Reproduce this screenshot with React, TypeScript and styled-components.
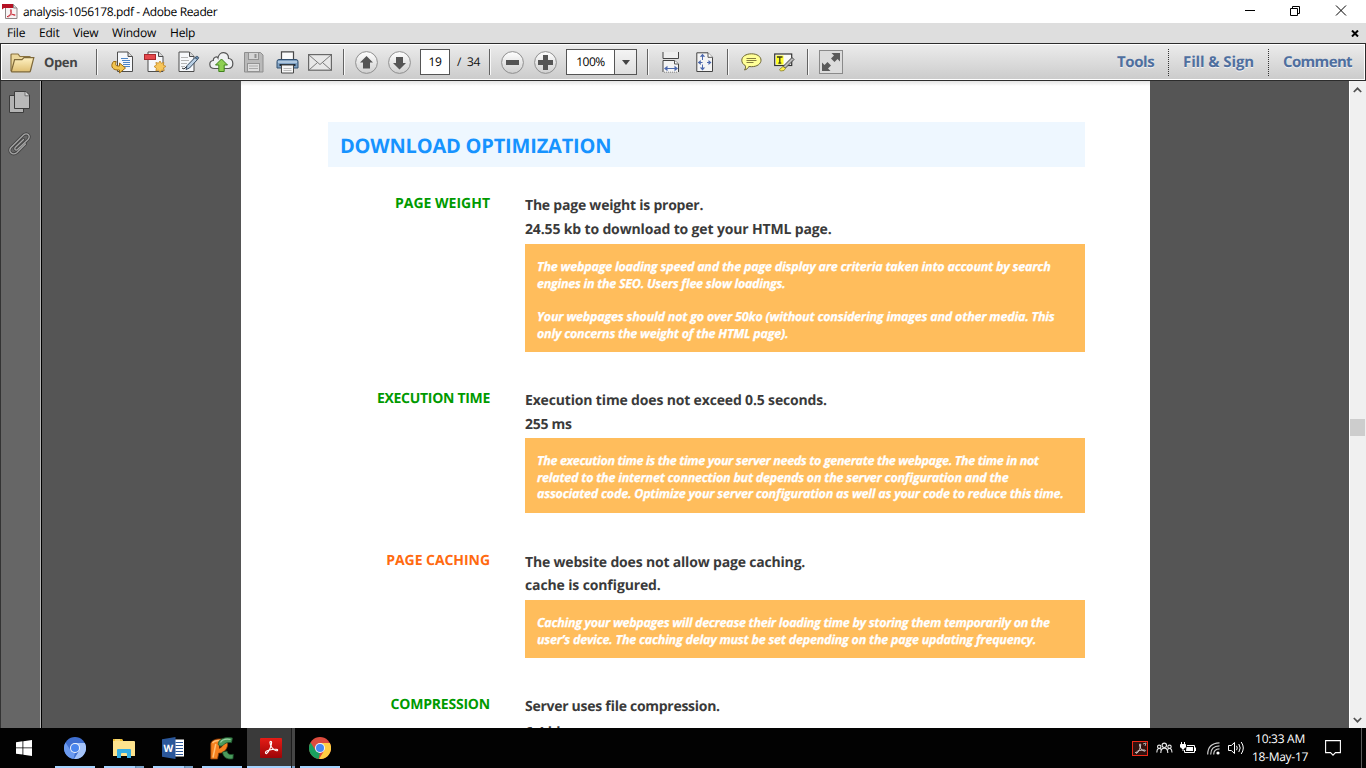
import React from "react";
import styled, { createGlobalStyle } from "styled-components";

const Global = createGlobalStyle`
  * { box-sizing: border-box; }
  html, body { margin: 0; padding: 0; }
  body { width: 1366px; height: 768px; overflow: hidden; background: #555;
    font-family: "Open Sans", "Noto Sans", sans-serif; text-rendering: geometricPrecision; }
  svg { display: block; flex: none; }
`;

const Screen = styled.div`
  width: 1366px; height: 768px; display: flex; flex-direction: column; overflow: hidden;
`;

/* Window chrome */
const TitleBar = styled.header`
  height: 23px; flex: none; background: #fff; display: flex; align-items: center; padding-left: 2px;
`;
const Title = styled.span`
  margin-left: 5px; font-size: 12px; line-height: 22px; color: #000; white-space: nowrap; letter-spacing: -0.37px; flex: 1;
`;
const WindowButtons = styled.div`
  display: flex; width: 122px; height: 23px;
`;
const MenuBar = styled.nav`
  height: 20px; flex: none; background: #dedede; display: flex; align-items: center; padding-left: 7px;
  font-size: 12px; line-height: 20px; color: #000;
`;
const MenuItem = styled.span<{ $w: number; $track?: number }>`
  width: ${(p) => p.$w}px; letter-spacing: ${(p) => p.$track ?? -0.2}px; white-space: nowrap;
`;
const MenuClose = styled.span`
  margin-left: auto; margin-right: 7px;
`;

/* Toolbar */
const ToolBar = styled.div`
  height: 38px; flex: none; display: flex; align-items: center; border: 1px solid #2c2c2c;
  box-shadow: inset 0 0 0 1px #fff; background: linear-gradient(#ececec, #cbcbcb);
`;
const Slot = styled.div<{ $w: number; $gap?: number }>`
  width: ${(p) => p.$w}px; margin-left: ${(p) => p.$gap ?? 0}px; height: 28px; flex: none;
  display: flex; align-items: center; justify-content: center;
`;
const Divider = styled.i<{ $gap: number }>`
  flex: none; width: 2px; height: 26px; margin-left: ${(p) => p.$gap}px;
  border-left: 1px solid #636363; border-right: 1px solid #f8f8f8;
`;
const OpenLabel = styled.span`
  width: 43px; margin-left: 9px; font-size: 13px; font-weight: 700; color: #444; letter-spacing: -0.35px; line-height: 20px;
`;
const PageInput = styled.div`
  width: 30px; height: 26px; margin-left: 9px; flex: none; border: 1px solid #555; background: #fff;
  font-size: 12px; line-height: 23px; text-align: center; letter-spacing: -0.4px; color: #000;
`;
const PageTotal = styled.span`
  width: 30px; margin-left: 7px; font-size: 12px; line-height: 20px; color: #111; letter-spacing: -0.25px; white-space: pre; flex: none;
`;
const ZoomBox = styled.div`
  display: flex; width: 71px; height: 26px; margin-left: 9px; flex: none; border: 1px solid #555; background: #fff;
`;
const ZoomValue = styled.span`
  width: 47px; font-size: 12px; line-height: 23px; text-align: center; letter-spacing: -0.5px; color: #000;
`;
const ZoomArrow = styled.span`
  flex: 1; display: flex; align-items: center; justify-content: center; border-left: 1px solid #555;
  background: linear-gradient(#f4f4f4, #dedede);
`;
const PanelLinks = styled.div`
  margin-left: auto; display: flex; height: 27px; align-items: center;
`;
const PanelLink = styled.span<{ $w: number; $first?: boolean; $track: number }>`
  width: ${(p) => p.$w}px; height: 27px; padding-left: 14px; line-height: 27px; white-space: nowrap;
  border-left: ${(p) => (p.$first ? "none" : "1px dotted #333")};
  font-size: 15px; font-weight: 700; color: #4f6f9f; letter-spacing: ${(p) => p.$track}px; text-shadow: 0 1px 0 #f4f4f4;
`;

/* Work area */
const Work = styled.main`
  height: 647px; flex: none; display: flex; background: #555;
`;
const Rail = styled.aside`
  width: 42px; flex: none; background: #666; border-left: 1px solid #333; border-right: 1px solid #000;
  box-shadow: inset -1px 0 0 #b5b5b5; padding: 9px 0 0 7px;
`;
const RailItem = styled.div<{ $top?: number }>`
  margin-top: ${(p) => p.$top ?? 0}px;
`;
const Paper = styled.article`
  width: 909px; height: 647px; margin-left: 199px; flex: none; background: linear-gradient(#e4e4e4, #fff 5px);
  padding: 41px 65px 0 87px; overflow: hidden;
`;
const ScrollBar = styled.div`
  width: 17px; margin-left: auto; border-left: 1px solid #fff; background: #f0f0f0; display: flex; flex-direction: column; align-items: center;
  padding: 6px 1px 5px 0;
`;
const Thumb = styled.i`
  width: 15px; height: 17px; margin-top: 326px; background: #cdcdcd;
`;
const ScrollDown = styled.span`
  margin-top: auto;
`;

/* Report content */
const SectionTitle = styled.h1<{ $track: number }>`
  margin: 0; height: 45px; padding-left: 12px; background: #eef7ff; color: #1693ff;
  font-size: 20px; font-weight: 700; line-height: 47px; letter-spacing: ${(p) => p.$track}px;
`;
const Entry = styled.section<{ $top: number }>`
  margin-top: ${(p) => p.$top}px; display: grid; grid-template-columns: 162px 560px; column-gap: 35px;
  font-feature-settings: "liga" 1;
`;
const Label = styled.h2<{ $warn?: boolean; $track: number }>`
  margin: 0; padding-top: 1px; text-align: right; white-space: nowrap; font-size: 14px; line-height: 20px; font-weight: 700;
  color: ${(p) => (p.$warn ? "#ff6a10" : "#009a00")}; letter-spacing: ${(p) => p.$track}px;
`;
const Fact = styled.p<{ $track?: number; $h?: number }>`
  margin: 0; height: ${(p) => p.$h ?? 24}px; padding-top: 3px; font-size: 14px; line-height: 20px; font-weight: 700;
  color: #3a3a3a; white-space: nowrap; letter-spacing: ${(p) => p.$track ?? 0}px;
`;
const Note = styled.div<{ $h: number }>`
  height: ${(p) => p.$h}px; padding: 14.8px 12px 0; background: #ffbd5c; color: #fff; font-size: 12.5px; line-height: 16.8px;
  font-weight: 700; font-style: italic; -webkit-text-stroke: 0.25px #fff;
`;
const NoteLine = styled.div<{ $track?: number }>`
  height: 16.8px; white-space: nowrap; letter-spacing: ${(p) => p.$track ?? 0}px;
`;

/* Taskbar */
const TaskBar = styled.footer`
  height: 40px; flex: none; display: flex; background: #020202; color: #fff;
`;
const Task = styled.div<{ $w: number; $gap?: number; $active?: boolean }>`
  width: ${(p) => p.$w}px; margin-left: ${(p) => p.$gap ?? 0}px; height: 40px; flex: none;
  display: flex; flex-direction: column; align-items: center; justify-content: space-between;
  background: ${(p) => (p.$active ? "#3a3a3a" : "transparent")};
`;
const TaskIcon = styled.div<{ $shift?: number }>`
  height: 38px; display: flex; align-items: center; padding-top: 2px; padding-left: ${(p) => p.$shift ?? 0}px;
`;
const Underline = styled.i<{ $stack?: boolean }>`
  align-self: stretch; height: 2px;
  background: ${(p) => (p.$stack ? "linear-gradient(90deg, #a5d3ff 31px, #5b85ac 31px, #7ba3c9 33px)" : "#a5d3ff")};
`;
const StackEdge = styled.i`
  width: 4px; height: 40px; flex: none; border-left: 1px solid #1c1c1c; background: linear-gradient(#464646 38px, #7ba3c9 38px);
`;
const Tray = styled.div`
  margin-left: auto; display: flex; align-items: center; width: 234px; height: 40px;
`;
const Clock = styled.div`
  width: 66px; margin-left: 2px; text-align: center; font-size: 12px; line-height: 18px; letter-spacing: -0.28px; white-space: nowrap;
`;
const PeekEdge = styled.i`
  width: 1px; height: 40px; margin-left: 20px; background: #5a5a5a;
`;

const Acro = ({ s, c = "#fff" }: { s: number; c?: string }) => (
  <path transform={`scale(${s})`} fill="none" stroke={c} strokeWidth="1.4" strokeLinecap="round"
    d="M3 16.5c0-2 6-4 13-4 2.500 0 2.500 2.200.2 1.800C12 13.500 8.500 8 8.500 4.300c0-2 2-2 2 .1C10.500 8.500 7 16 4.500 17.600 3.600 18.100 3 17.300 3 16.500z" />
);

const PdfAppIcon = () => (
  <svg width="16" height="17" viewBox="0 0 16 17">
    <path d="M3.500 1.500h8l3.500 3.500v10.500H3.500z" fill="#f7f4f4" stroke="#8d8585" />
    <path d="M11.500 1.500V5H15" fill="#ddd" stroke="#8d8585" />
    <path d="M0 1h11v4H2L0 6.500z" fill="#b51224" />
    <g transform="translate(4 5)"><Acro s={0.52} c="#c41422" /></g>
  </svg>
);

const FolderIcon = () => (
  <svg width="25" height="21" viewBox="0 0 25 21">
    <defs><linearGradient id="fo" x2="0" y2="1"><stop stopColor="#fff2c4" /><stop offset="1" stopColor="#dfbf72" /></linearGradient></defs>
    <path d="M1 19V3q0-1 1-1h6l2 2.500h9.500q1 0 1 1V18" fill="#ecd79b" stroke="#8a7340" strokeWidth="1.200" />
    <path d="M1.300 19.500 4.600 7.600H12l2-2h9.800L20.400 19q-.2.800-1 .8H2q-.8 0-.7-.3z" fill="url(#fo)" stroke="#7e6839" strokeWidth="1.200" />
  </svg>
);

const Sheet = ({ x = 0 }: { x?: number }) => (
  <g transform={`translate(${x} 0)`}>
    <path d="M1 1h10.500L16 5.500V20.500H1z" fill="#f6f8fb" stroke="#4d4d4d" />
    <path d="M11.500 1v4.500H16" fill="#d8d8d8" stroke="#4d4d4d" />
  </g>
);

const ConvertIcon = () => (
  <svg width="23" height="23" viewBox="0 0 23 23">
    <Sheet x={5.5} />
    <path d="M10 7.500h7M11 9.500h8M12 11.500h7M12 13.500h7M12 15.500h7" stroke="#4d86c8" />
    <path d="M2.500 10.500C-.5 14 .5 18.500 6 19h2.500v3l6-5-6-5V15H6.500c-2-.2-2.300-2-1.300-4.500z" fill="#f3c54f" stroke="#9a6b12" />
  </svg>
);
const CreatePdfIcon = () => (
  <svg width="23" height="23" viewBox="0 0 23 23">
    <Sheet x={3} />
    <rect x=".5" y="3.500" width="11" height="5" fill="#e5484c" stroke="#a7282d" />
    <path d="m16 10 1.300 2.300 2.600-.8-.6 2.600 2.700 1.300-2.500 1.400.8 2.700-2.700-.5-1.500 2.600-1.600-2.500-2.600.7.5-2.700-2.400-1.600 2.500-1.400-.6-2.600 2.600.7z" fill="#f7c65a" stroke="#c28725" strokeWidth=".8" />
  </svg>
);
const EditIcon = () => (
  <svg width="22" height="23" viewBox="0 0 22 23">
    <Sheet x={0} />
    <path d="M3 6.500h7M3 9.500h8M3 12.500h6M3 15.500h4" stroke="#b5b5b5" />
    <path d="m4 17 2 1 3-3" fill="none" stroke="#333" />
    <path d="m17 6.500 2.500 2L11.500 17l-3.500 1.500 1-3.800z" fill="#bad0e5" stroke="#35495f" />
    <path d="m17 6.500 2-1.500 2 1.800-1.500 1.700z" fill="#668aac" stroke="#35495f" strokeWidth=".7" />
  </svg>
);
const CloudIcon = () => (
  <svg width="25" height="22" viewBox="0 0 25 22">
    <path d="M5.500 17.500C-.5 17.500-.5 10 4.300 9.500 4 6 8 5 9 7 10-.5 20 0 19.500 7.500c5.500.3 6 9.500 0 10z" fill="#f0f2f3" stroke="#555" strokeWidth="1.200" />
    <path d="m12.500 8 6 6h-3.300v6.500h-5.400V14H6.500z" fill="#8ed052" stroke="#40821f" />
  </svg>
);
const SaveIcon = () => (
  <svg width="20" height="21" viewBox="0 0 20 21">
    <path d="M.5.5h16L19 3v17H.5z" fill="#b9b9b9" stroke="#8e8e8e" />
    <rect x="4.500" y=".5" width="10" height="7" fill="#d5d5d5" stroke="#929292" />
    <path d="M11.500 2v4" stroke="#8e8e8e" strokeWidth="2" />
    <rect x="3.500" y="11.500" width="12" height="8" fill="#dedede" stroke="#929292" />
    <path d="M5 14h9M5 16.500h9" stroke="#aaa" />
  </svg>
);
const PrintIcon = () => (
  <svg width="23" height="23" viewBox="0 0 23 23">
    <path d="M5.500 9V.8h12V9" fill="#fafafa" stroke="#484848" strokeWidth="1.200" />
    <path d="M3 8.500h17q2 0 2 2V17H1v-6.500q0-2 2-2z" fill="#7d9fc2" stroke="#33506f" />
    <path d="M2 11h19" stroke="#c1d6ea" strokeWidth="1.500" />
    <path d="M3.500 14h16" stroke="#1d2c3b" strokeWidth="2" />
    <path d="M5.500 14h12v8h-12z" fill="#f5f5f5" stroke="#484848" />
    <path d="M7.500 17.500h8M7.500 19.500h8" stroke="#bbb" />
  </svg>
);
const MailIcon = () => (
  <svg width="24" height="17" viewBox="0 0 24 17">
    <rect x=".6" y=".6" width="22.800" height="15.600" fill="#e8e8e8" stroke="#686868" strokeWidth="1.200" />
    <path d="m1 1 11 9.500L23 1M1 16l8.500-7.500M23 16l-8.500-7.500" fill="none" stroke="#7a7a7a" />
  </svg>
);

const RoundIcon = ({ d }: { d: string }) => (
  <svg width="23" height="23" viewBox="0 0 23 23">
    <defs><linearGradient id="rd" x2="0" y2="1"><stop stopColor="#fff" /><stop offset="1" stopColor="#cfcfcf" /></linearGradient></defs>
    <circle cx="11.500" cy="11.500" r="10.900" fill="url(#rd)" stroke="#8e8e8e" />
    <path d={d} fill="#555" />
  </svg>
);
const UP = "M11.500 5l6.500 6.500h-3V17.500H8v-6H5z";
const DOWN = "M11.500 18.500l6.500-6.500h-3V6H8v6H5z";
const MINUS = "M5 9h13v5H5z";
const PLUS = "M9 4h5v5h5v5h-5v5H9v-5H4V9h5z";

const FitWidthIcon = () => (
  <svg width="18" height="22" viewBox="0 0 18 22">
    <path d="M1 1v6.500h15.500V1" fill="#eee" stroke="#444" />
    <path d="M1 21v-11.500h11.500l4 3.500v8" fill="#f4f4f4" stroke="#444" />
    <path d="M12.500 9.500v3.500h4" fill="#fff" stroke="#555" />
    <path d="M2 21.200h14" stroke="#888" strokeDasharray="1 1" />
    <path d="M3.500 17.500h11" stroke="#4c68ad" />
    <path d="m2 17.500 3.500-2.800v5.600zM16 17.500l-3.500-2.800v5.600z" fill="#4c68ad" />
  </svg>
);
const FitPageIcon = () => (
  <svg width="18" height="21" viewBox="0 0 18 21">
    <path d="M.8.8H12l4.500 4.500V19.500H.8z" fill="#f4f4f4" stroke="#444" />
    <path d="M12 .8v4.500h4.500" fill="#fff" stroke="#555" />
    <path d="M6.500 4v4M6.500 12.500v4M2.500 10.500h4M11 10.500h3" stroke="#4c68ad" />
    <path d="m6.500 1.800 2.700 3H3.800zM6.500 18.500l2.700-3H3.800zM1.800 10.500l3-2.500v5zM15.500 10.500l-3-2.500v5z" fill="#4c68ad" />
  </svg>
);
const CommentIcon = () => (
  <svg width="21" height="18" viewBox="0 0 21 18">
    <path d="M10.500.8c5.500 0 9.500 2.700 9.500 6.400s-4 6.500-9.500 6.500L7.800 13.500C7 15.500 5.500 16.500 3.500 17c1-1.300 1.300-2.700.8-4.400C2 11.500.8 9.500.8 7.200.8 3.500 5 .8 10.500.8z" fill="#ffff98" stroke="#6b6432" />
    <path d="M5.500 5.500h9.500M5.500 7.500h10M5.500 9.500h7" stroke="#857d40" />
  </svg>
);
const HighlightIcon = () => (
  <svg width="21" height="19" viewBox="0 0 21 19">
    <rect x=".7" y="1" width="17" height="11.500" fill="#fafafa" stroke="#333" strokeWidth="1.200" />
    <path d="M2 2.500h7.500v9H2z" fill="#ffff28" />
    <path d="M3 4h5.500M5.800 4v6M4.300 10.200h3" fill="none" stroke="#3a3a1d" strokeWidth="1.300" />
    <path d="m18 4.500 2 2L11.500 15 9 13.500z" fill="#bbb" stroke="#444" />
    <path d="m9 13.500 2.500 1.800-1.500 2.200-3.500.5-1-1.500z" fill="#fff04a" stroke="#89802a" strokeWidth=".8" />
  </svg>
);
const ExpandIcon = () => (
  <svg width="24" height="24" viewBox="0 0 24 24">
    <rect x=".5" y=".5" width="23" height="23" fill="#dcdcdc" stroke="#8a8a8a" />
    <path d="M12.500 3H21v8.500l-2.500-2.500-3 3-3.500-3.500 3-3zM3 12.500 5.500 15l3-3 3.500 3.500-3 3 2.500 2.500H3z" fill="#5a5a5a" />
  </svg>
);

const PagesIcon = () => (
  <svg width="22" height="24" viewBox="0 0 22 24">
    <path d="M1.500 5.500h14v17h-14z" fill="#b3b3b3" stroke="#3c3c3c" />
    <path d="M6.500 1.500H18l3.500 3.500v13.500h-15z" fill="#b9b9b9" stroke="#3c3c3c" />
    <path d="M17 1.800v4h4" fill="#d7d7d7" stroke="#707070" />
  </svg>
);
const ClipIcon = () => (
  <svg width="23" height="24" viewBox="0 0 23 24" fill="none" strokeLinecap="round">
    <g stroke="#424242" strokeWidth="3"><path d="M17.500 12 9 20.500C4.500 24-.5 19.500 3 15.500L15.500 3c4-3 7.500 1 4.500 4.500L9.500 17.500c-2 1.500-3.500-.5-2-2.300l8-7.700" /></g>
    <g stroke="#a5a5a5" strokeWidth="1.300"><path d="M17.500 12 9 20.500C4.500 24-.5 19.500 3 15.500L15.500 3c4-3 7.500 1 4.500 4.500L9.500 17.500c-2 1.500-3.500-.5-2-2.300l8-7.700" /></g>
  </svg>
);

const ChromeIcon = ({ c, core }: { c: [string, string, string]; core: string }) => (
  <svg width="22" height="22" viewBox="0 0 22 22">
    <circle cx="11" cy="11" r="11" fill={c[0]} />
    <path d="M1.500 5.500 6.700 13.500 11 16l-1.500 6A11 11 0 0 1 1.500 5.500z" fill={c[1]} />
    <path d="M11 6h9.800A11 11 0 0 1 10 22l5.300-8.500z" fill={c[2]} />
    <circle cx="11" cy="11" r="5" fill="#f3f6fb" />
    <circle cx="11" cy="11" r="4" fill={core} />
  </svg>
);
const WinIcon = () => (
  <svg width="16" height="16" viewBox="0 0 16 16"><path d="M0 2.200 6.500 1.300v6.200H0zM7.300 1.200 16 0v7.500H7.300zM0 8.300h6.500v6.300L0 13.700zM7.300 8.300H16V16l-8.700-1.200z" fill="#fff" /></svg>
);
const ExplorerIcon = () => (
  <svg width="22" height="19" viewBox="0 0 22 19">
    <path d="M0 1q0-1 1-1h8l1 2h11q1 0 1 1v14H0z" fill="#fde38d" />
    <path d="M0 1q0-1 1-1h8l1 2H0z" fill="#eebd2f" />
    <path d="M2 1h5" stroke="#fff2c0" />
    <path d="M4 19v-8q0-1 1-1h12q1 0 1 1v8h-4v-4q0-1-1-1H9q-1 0-1 1v4z" fill="#35aee3" />
  </svg>
);
const WordText = styled.text`
  font: 700 10px "Open Sans", sans-serif; fill: #fff;
`;
const WordIcon = () => (
  <svg width="22" height="22" viewBox="0 0 22 22">
    <rect x="11" y="2.500" width="11" height="17" fill="#fff" />
    <path d="M13.500 5.500H21M13.500 8.500H21M13.500 11.500H21M13.500 14.500H21M13.500 17.500H21" stroke="#2b579a" />
    <path d="M0 2.300 13.500 0v22L0 19.700z" fill="#2b579a" />
    <WordText x="1.400" y="14.700">W</WordText>
  </svg>
);
const PcIcon = () => (
  <svg width="24" height="23" viewBox="0 0 24 23" fill="none">
    <path d="M.8 6.500C2 3 6 1.500 12 2c5.500.4 6.500 4.500 5 8.300-1.500 4-5 6.200-8.300 5.700L7.500 22H.8z" fill="#f5811f" stroke="#8c3c08" strokeWidth=".8" />
    <path d="M2.500 6C4 4 7 3.200 11 3.500M5.800 7 3 20.500" stroke="#ffbf75" strokeWidth="1.500" />
    <path d="M9 7h2.500c1.500.2 1 4-2.500 4.800z" fill="#5b2504" />
    <path d="M22.500 1C16-.3 10 1.500 8.500 5.500c-1 3 1.500 4.500 4.500 3C14.500 6 18 5 21.500 5.700zM12.500 15c.3 5 4.500 8 10.500 6.800l.3-4.600c-3.500 1-5.800-.2-6.300-3.200z" fill="#4a9a5c" stroke="#1c4f2a" strokeWidth=".8" />
    <path d="M10.500 5.500c1.500-2.800 5.500-3.800 10-3" stroke="#9bd1a4" strokeWidth="1.200" />
  </svg>
);
const ReaderIcon = () => (
  <svg width="22" height="20" viewBox="0 0 22 20">
    <defs><linearGradient id="rr" x2="0" y2="1"><stop stopColor="#e51c16" /><stop offset="1" stopColor="#9c0507" /></linearGradient></defs>
    <rect width="22" height="20" rx="1" fill="url(#rr)" />
    <g transform="translate(3 1)"><Acro s={0.82} /></g>
  </svg>
);
const TrayReaderIcon = () => (
  <svg width="16" height="15" viewBox="0 0 16 15">
    <rect x=".5" y=".5" width="15" height="14" fill="#33120f" stroke="#f02a18" />
    <g transform="translate(2 1)"><Acro s={0.64} c="#ddd" /></g>
    <path d="m11 3 3-1-1 3" stroke="#aaa" fill="none" />
  </svg>
);
const PeopleIcon = () => (
  <svg width="17" height="12" viewBox="0 0 17 12" fill="none" stroke="#e8e8e8" strokeWidth="1.100">
    <circle cx="8.300" cy="3.300" r="2.200" /><circle cx="3.200" cy="4.800" r="1.700" /><circle cx="13.500" cy="4.800" r="1.700" />
    <path d="M4.800 11c0-6.500 7-6.500 7 0M.8 10.500C.8 6 4 5.500 5 7.500M16 10.500c0-4.500-3.200-5-4.200-3" />
  </svg>
);
const BatteryIcon = () => (
  <svg width="17" height="13" viewBox="0 0 17 13" fill="none" stroke="#fff">
    <path d="M1.500 0v2.500M4.500 0v2.500" />
    <path d="M.5 2.500h5v2.500L4 6.500H2L.5 5z" fill="#fff" /><path d="M3 6.500v2.500" />
    <path d="M7 3.500h7.500v7h-10V8" /><path d="M6.500 5h6.500v4H6z" fill="#fff" stroke="none" /><path d="M15.500 5.500v3.500" />
  </svg>
);
const WifiIcon = () => (
  <svg width="13" height="13" viewBox="0 0 13 13" fill="none" stroke="#ccc" strokeWidth="1.200">
    <path d="M.7 12.500C.7 5 5 1 12.500.8M3.700 12.500C3.700 7 7 4 12.500 3.900M6.700 12.500C6.700 9 9 7 12.500 6.900" />
    <circle cx="11" cy="11" r="1.600" fill="#fff" stroke="none" />
  </svg>
);
const SpeakerIcon = () => (
  <svg width="17" height="14" viewBox="0 0 17 14" fill="none" stroke="#fff">
    <path d="M.5 4.500h2.800L6.500 1.500v11L3.300 9.500H.5zM8.500 4.800q1.500 2.200 0 4.400M10.800 3q2.800 4 0 8M13.200 1q4.200 6 0 12" />
  </svg>
);
const ActionIcon = () => (
  <svg width="16" height="16" viewBox="0 0 16 16" fill="none" stroke="#fff" strokeWidth="1.100"><path d="M.6.6h14.800v12H10.500L8 15.200 5.500 12.600H.6z" /></svg>
);

type EntryData = {
  top: number; label: string; track: number; warn?: boolean;
  facts: { t: string; k?: number; h?: number }[];
  noteHeight?: number; note?: { t: string; k?: number }[];
};
const entries: EntryData[] = [
  { top: 26, label: "PAGE WEIGHT", track: 0,
    facts: [{ t: "The page weight is proper.", k: -0.22 }, { t: "24.55 kb to download to get your HTML page.", k: -0.15, h: 27 }],
    noteHeight: 108, note: [
      { t: "The webpage loading speed and the page display are criteria taken into account by search", k: -0.21 },
      { t: "engines in the SEO. Users flee slow loadings.", k: -0.27 }, { t: "" },
      { t: "Your webpages should not go over 50ko (without considering images and other media. This", k: -0.205 },
      { t: "only concerns the weight of the HTML page).", k: -0.22 }] },
  { top: 36, label: "EXECUTION TIME", track: -0.3,
    facts: [{ t: "Execution time does not exceed 0.5 seconds.", k: -0.16 }, { t: "255 ms", k: -0.3, h: 26 }],
    noteHeight: 75, note: [
      { t: "The execution time is the time your server needs to generate the webpage. The time in not", k: -0.36 },
      { t: "related to the internet connection but depends on the server configuration and the", k: -0.235 },
      { t: "associated code. Optimize your server configuration as well as your code to reduce this time.", k: -0.225 }] },
  { top: 37, label: "PAGE CACHING", track: -0.06, warn: true,
    facts: [{ t: "The website does not allow page caching.", k: -0.18, h: 23 }, { t: "cache is configured.", k: -0.13, h: 27 }],
    noteHeight: 58, note: [
      { t: "Caching your webpages will decrease their loading time by storing them temporarily on the", k: -0.295 },
      { t: "user’s device. The caching delay must be set depending on the page updating frequency.", k: -0.225 }] },
  { top: 36, label: "COMPRESSION", track: -0.2,
    facts: [{ t: "Server uses file compression.", k: -0.28, h: 26 }, { t: "6.4 kb", k: -0.2 }] },
];

export default function App() {
  return (
    <Screen>
      <Global />
      <TitleBar>
        <PdfAppIcon />
        <Title>analysis-1056178.pdf - Adobe Reader</Title>
        <WindowButtons>
          <svg width="122" height="23" viewBox="0 0 122 23" fill="none" stroke="#000">
            <path d="M1 10.500h10M46.500 8.500h7v7h-7zM48.500 8.500v-2h7v7h-2M92 5.500l10 10M102 5.500l-10 10" />
          </svg>
        </WindowButtons>
      </TitleBar>
      <MenuBar>
        <MenuItem $w={32}>File</MenuItem>
        <MenuItem $w={34}>Edit</MenuItem>
        <MenuItem $w={39}>View</MenuItem>
        <MenuItem $w={58}>Window</MenuItem>
        <MenuItem $w={40}>Help</MenuItem>
        <MenuClose>
          <svg width="8" height="7" viewBox="0 0 8 7"><path d="m1 .5 6 6M7 .5l-6 6" stroke="#000" strokeWidth="2" /></svg>
        </MenuClose>
      </MenuBar>
      <ToolBar>
        <Slot $w={25} $gap={9}><FolderIcon /></Slot>
        <OpenLabel>Open</OpenLabel>
        <Divider $gap={9} />
        <Slot $w={23} $gap={13}><ConvertIcon /></Slot>
        <Slot $w={23} $gap={10}><CreatePdfIcon /></Slot>
        <Slot $w={22} $gap={11}><EditIcon /></Slot>
        <Slot $w={25} $gap={9}><CloudIcon /></Slot>
        <Slot $w={20} $gap={10}><SaveIcon /></Slot>
        <Slot $w={23} $gap={12}><PrintIcon /></Slot>
        <Slot $w={24} $gap={9}><MailIcon /></Slot>
        <Divider $gap={11} />
        <Slot $w={23} $gap={10}><RoundIcon d={UP} /></Slot>
        <Slot $w={23} $gap={10}><RoundIcon d={DOWN} /></Slot>
        <PageInput>19</PageInput>
        <PageTotal>/  34</PageTotal>
        <Divider $gap={2} />
        <Slot $w={23} $gap={10}><RoundIcon d={MINUS} /></Slot>
        <Slot $w={23} $gap={10}><RoundIcon d={PLUS} /></Slot>
        <ZoomBox>
          <ZoomValue>100%</ZoomValue>
          <ZoomArrow><svg width="8" height="5" viewBox="0 0 8 5"><path d="M0 0h8L4 5z" fill="#444" /></svg></ZoomArrow>
        </ZoomBox>
        <Divider $gap={10} />
        <Slot $w={18} $gap={13}><FitWidthIcon /></Slot>
        <Slot $w={18} $gap={16}><FitPageIcon /></Slot>
        <Divider $gap={13} />
        <Slot $w={21} $gap={12}><CommentIcon /></Slot>
        <Slot $w={21} $gap={12}><HighlightIcon /></Slot>
        <Divider $gap={12} />
        <Slot $w={24} $gap={10}><ExpandIcon /></Slot>
        <PanelLinks>
          <PanelLink $w={65} $first $track={-0.4}>Tools</PanelLink>
          <PanelLink $w={100} $track={-0.1}>Fill &amp; Sign</PanelLink>
          <PanelLink $w={97} $track={-0.65}>Comment</PanelLink>
        </PanelLinks>
      </ToolBar>
      <Work>
        <Rail>
          <RailItem><PagesIcon /></RailItem>
          <RailItem $top={18}><ClipIcon /></RailItem>
        </Rail>
        <Paper>
          <SectionTitle $track={-0.19}>DOWNLOAD OPTIMIZATION</SectionTitle>
          {entries.map((e) => (
            <Entry key={e.label} $top={e.top}>
              <Label $warn={e.warn} $track={e.track}>{e.label}</Label>
              <div>
                {e.facts.map((f) => <Fact key={f.t} $track={f.k} $h={f.h}>{f.t}</Fact>)}
                {e.note && (
                  <Note $h={e.noteHeight ?? 0}>
                    {e.note.map((n, i) => <NoteLine key={i} $track={n.k}>{n.t}</NoteLine>)}
                  </Note>
                )}
              </div>
            </Entry>
          ))}
        </Paper>
        <ScrollBar>
          <svg width="9" height="6" viewBox="0 0 9 6"><path d="m.8 5 3.700-3.700L8.200 5" fill="none" stroke="#505050" strokeWidth="1.700" /></svg>
          <Thumb />
          <ScrollDown>
            <svg width="9" height="6" viewBox="0 0 9 6"><path d="m.8 1 3.700 3.700L8.200 1" fill="none" stroke="#505050" strokeWidth="1.700" /></svg>
          </ScrollDown>
        </ScrollBar>
      </Work>
      <TaskBar>
        <Task $w={48}><TaskIcon><WinIcon /></TaskIcon></Task>
        <Task $w={40} $gap={7}><TaskIcon><ChromeIcon c={["#3f6fd0", "#6c9bf0", "#a5c4fa"]} core="#4a86ee" /></TaskIcon><Underline /></Task>
        <Task $w={40} $gap={9}><TaskIcon><ExplorerIcon /></TaskIcon><Underline $stack /></Task>
        <Task $w={40} $gap={9}><TaskIcon><WordIcon /></TaskIcon><Underline $stack /></Task>
        <Task $w={40} $gap={9}><TaskIcon><PcIcon /></TaskIcon><Underline /></Task>
        <Task $w={44} $gap={5} $active><TaskIcon $shift={4}><ReaderIcon /></TaskIcon><Underline /></Task>
        <StackEdge />
        <Task $w={40} $gap={5}><TaskIcon><ChromeIcon c={["#dd4b3e", "#19a15f", "#ffce43"]} core="#4587f3" /></TaskIcon><Underline /></Task>
        <Tray>
          <Slot $w={16}><TrayReaderIcon /></Slot>
          <Slot $w={17} $gap={8}><PeopleIcon /></Slot>
          <Slot $w={17} $gap={7}><BatteryIcon /></Slot>
          <Slot $w={13} $gap={10}><WifiIcon /></Slot>
          <Slot $w={17} $gap={8}><SpeakerIcon /></Slot>
          <Clock>10:33 AM<br />18-May-17</Clock>
          <Slot $w={16} $gap={12}><ActionIcon /></Slot>
          <PeekEdge />
        </Tray>
      </TaskBar>
    </Screen>
  );
}
